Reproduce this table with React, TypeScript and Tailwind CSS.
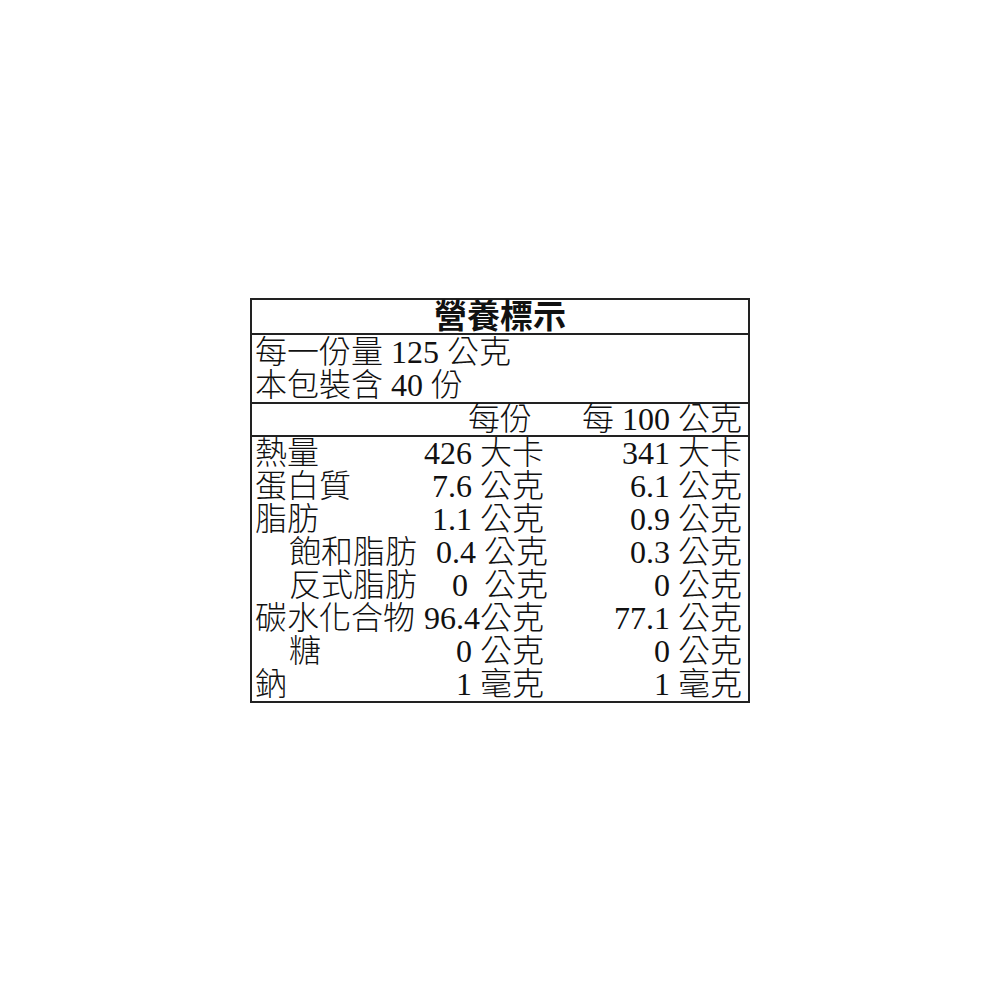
import React from "react";

interface Row {
  label: string;
  indent?: boolean;
  perServing: string;
  per100: string;
  shift?: boolean;
}

const rows: Row[] = [
  { label: "熱量", perServing: "426 大卡", per100: "341 大卡" },
  { label: "蛋白質", perServing: "7.6 公克", per100: "6.1 公克" },
  { label: "脂肪", perServing: "1.1 公克", per100: "0.9 公克" },
  { label: "飽和脂肪", indent: true, perServing: "0.4 公克", per100: "0.3 公克", shift: true },
  { label: "反式脂肪", indent: true, perServing: "0\u00a0\u00a0公克", per100: "0 公克", shift: true },
  { label: "碳水化合物", perServing: "96.4公克", per100: "77.1 公克" },
  { label: "糖", indent: true, perServing: "0 公克", per100: "0 公克" },
  { label: "鈉", perServing: "1 毫克", per100: "1 毫克" },
];

export default function App() {
  return (
    <div className="flex h-[1000px] w-full items-center justify-center bg-white font-['Liberation_Serif','Noto_Sans_CJK_TC',serif] text-[#111]">
      <div className="w-[500px] border-2 border-[#222] font-light">
        {/* title */}
        <div className="h-[35px] border-b-2 border-[#222] text-center text-[33px] font-bold leading-[34px]">
          營養標示
        </div>

        {/* serving info */}
        <div className="h-[69px] border-b-2 border-[#222] pl-[3px] pt-[1px] text-[32px] leading-[33px]">
          <div>每一份量 125 公克</div>
          <div>本包裝含 40 份</div>
        </div>

        {/* column header */}
        <div className="grid h-[33px] grid-cols-[166px_123px_198px] border-b-2 border-[#222] pl-[3px] text-[32px] leading-[31px]">
          <div />
          <div className="pr-[12px] text-right">每份</div>
          <div className="text-right">每 100 公克</div>
        </div>

        {/* nutrients */}
        <div className="pl-[3px] text-[32px] leading-[33px]">
          {rows.map((r) => (
            <div key={r.label} className="grid h-[33px] grid-cols-[166px_127px_194px]">
              <div className={r.indent ? "whitespace-nowrap pl-[34px]" : "whitespace-nowrap"}>{r.label}</div>
              <div className={r.shift ? "whitespace-nowrap text-right" : "whitespace-nowrap pr-[4px] text-right"}>
                {r.perServing}
              </div>
              <div className="whitespace-nowrap text-right">{r.per100}</div>
            </div>
          ))}
        </div>
      </div>
    </div>
  );
}
